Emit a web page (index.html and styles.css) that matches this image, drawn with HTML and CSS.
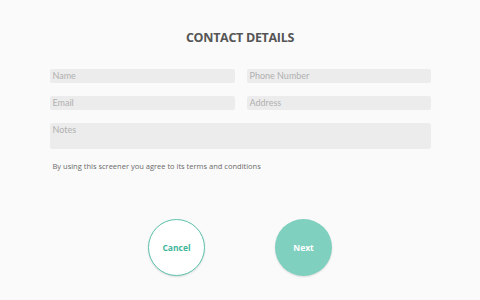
FILE: index.html
```html
<!DOCTYPE html>
<html>
<head>
<meta charset="utf-8">
<link rel="stylesheet" href="styles.css">
</head>
<body>
<main class="page">
  <h1 class="title">CONTACT DETAILS</h1>
  <form class="form">
    <div class="grid">
      <div class="field">Name</div>
      <div class="field">Phone Number</div>
      <div class="field">Email</div>
      <div class="field">Address</div>
      <div class="field notes">Notes</div>
    </div>
    <p class="terms">By using this screener you agree to its terms and conditions</p>
  </form>
  <div class="actions">
    <button type="button" class="btn cancel">Cancel</button>
    <button type="button" class="btn next">Next</button>
  </div>
</main>
</body>
</html>
```
FILE: styles.css
```css
html, body {
  margin: 0;
  padding: 0;
  background: #fafafa;
  width: 480px;
  height: 300px;
  overflow: hidden;
}
.page {
  display: flex;
  flex-direction: column;
  align-items: center;
  font-family: "Open Sans", "Noto Sans", sans-serif;
}
.title {
  margin: 29px 0 0;
  height: 18px;
  line-height: 18px;
  font-size: 12.5px;
  font-weight: 700;
  color: #555555;
  letter-spacing: -0.3px;
}
.form {
  width: 382px;
  margin: 22px 0 0;
  padding-left: 1px;
}
.grid {
  display: grid;
  grid-template-columns: 185px 184px;
  column-gap: 12px;
  row-gap: 13px;
}
.field {
  height: 14px;
  background: #ececec;
  border-radius: 2px;
  font-family: "Lato", "Open Sans", sans-serif;
  font-size: 9px;
  line-height: 14px;
  color: #b0b0b0;
  padding-left: 3px;
}
.notes {
  grid-column: 1 / span 2;
  height: 26px;
  line-height: 14px;
}
.terms {
  margin: 12px 0 0 3px;
  font-size: 7.5px;
  line-height: 10px;
  color: #6a6a6a;
}
.actions {
  display: flex;
  gap: 70px;
  margin-top: 48px;
}
.btn {
  width: 57px;
  height: 57px;
  border-radius: 50%;
  font-family: "Open Sans", "Noto Sans", sans-serif;
  font-size: 8.5px;
  font-weight: 700;
  padding: 0;
  box-shadow: 0 1px 2px rgba(0,0,0,0.12);
}
.cancel {
  background: #ffffff;
  border: 1.5px solid #5cc3ad;
  color: #3fb59a;
}
.next {
  background: #80d0c0;
  border: none;
  color: #ffffff;
}
```
